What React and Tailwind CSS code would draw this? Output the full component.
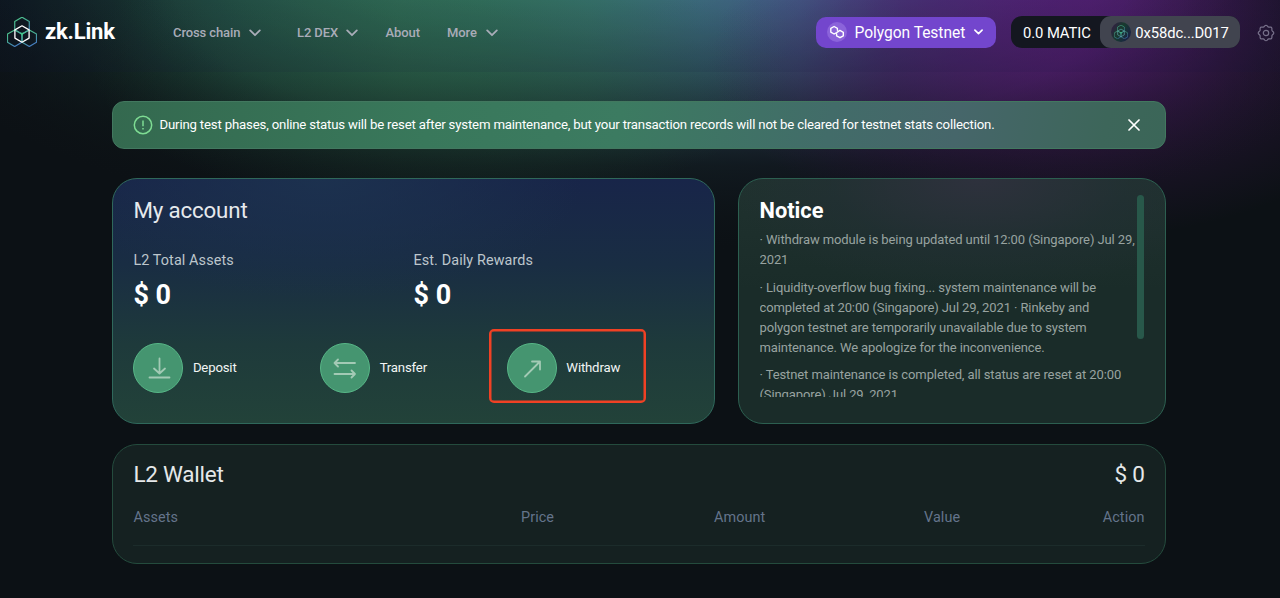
import React from "react";

const hex = (cx, cy, r) => {
  const w = r * 0.866;
  return `M${cx} ${cy - r}L${cx + w} ${cy - r / 2}V${cy + r / 2}L${cx} ${cy + r}L${cx - w} ${cy + r / 2}V${cy - r / 2}Z`;
};

function Logo({ className, inner = "#ffffff", id }) {
  return (
    <svg viewBox="0 0 30 30" className={className} fill="none">
      <defs>
        <linearGradient id={id} x1="0" y1="0" x2="0.5" y2="1">
          <stop offset="0" stopColor="#4fc98a" />
          <stop offset="0.55" stopColor="#47a995" />
          <stop offset="1" stopColor="#467fc0" />
        </linearGradient>
      </defs>
      <g stroke={`url(#${id})`} strokeWidth="1.2" strokeLinejoin="round">
        <path d={hex(15, 8.6, 8.4)} />
        <path d={hex(7.7, 21.2, 8.3)} />
        <path d={hex(22.3, 21.2, 8.3)} />
      </g>
      <path d={hex(15, 17, 8.2)} stroke={inner} strokeWidth="1.3" strokeLinejoin="round" />
      <path d="M12.6 15.8h4.8l-2.4 3z" fill="#3fc487" />
    </svg>
  );
}

function Chevron({ className, width = 1.8 }) {
  return (
    <svg viewBox="0 0 12 8" className={className} fill="none" stroke="currentColor" strokeWidth={width} strokeLinecap="round" strokeLinejoin="round">
      <path d="M1.2 1.4 6 6.2l4.8-4.8" />
    </svg>
  );
}

function Gear() {
  const pts = [];
  for (let i = 0; i <= 72; i++) {
    const a = (i / 72) * Math.PI * 2;
    const r = 7.1 + 0.65 * Math.cos(8 * a);
    pts.push(`${(9 + r * Math.cos(a)).toFixed(2)} ${(9 + r * Math.sin(a)).toFixed(2)}`);
  }
  return (
    <svg viewBox="0 0 18 18" className="h-[18px] w-[18px] shrink-0" fill="none" stroke="#77708a" strokeWidth="1.2">
      <path d={`M${pts.join("L")}Z`} />
      <circle cx="9" cy="9" r="2.7" />
    </svg>
  );
}

function Action({ label, children }) {
  return (
    <div className="flex w-[187px] items-center">
      <div className="flex h-[50px] w-[50px] items-center justify-center rounded-full border border-[#57b787] bg-[#459570]">
        <svg viewBox="0 0 50 50" className="h-[50px] w-[50px] shrink-0" fill="none" stroke="#a3cab5" strokeWidth="1.8" strokeLinecap="round" strokeLinejoin="round">
          {children}
        </svg>
      </div>
      <span className="ml-[9.5px] text-[13.2px] leading-5 tracking-[-0.18px] text-[#f1f5f4]">{label}</span>
    </div>
  );
}

function Stat({ label }) {
  return (
    <div className="w-[280.5px]">
      <div className="text-[14.4px] leading-5 tracking-[0.1px] text-[#bdc6cc]">{label}</div>
      <div className="mt-1.5 text-[27px] font-bold leading-9 text-white">$ 0</div>
    </div>
  );
}

export default function App() {
  return (
    <div
      className="h-[598px] w-[1280px] overflow-hidden bg-[#0c1115] bg-[radial-gradient(ellipse_350px_180px_at_1060px_60px,#51196a80_0%,#46185c50_50%,transparent_100%),radial-gradient(ellipse_350px_155px_at_440px_60px,#2c6a4c50_0%,#2c6a4c30_50%,transparent_100%),linear-gradient(180deg,#0c111500_0px,#0c111520_25px,#0c111566_72px,#0c1115a8_110px,#0c1115e0_165px,#0c1115_270px),radial-gradient(ellipse_770px_270px_at_650px_-20px,transparent_62%,#0c1115_100%),linear-gradient(90deg,#10222a_0px,#183630_120px,#235043_240px,#327056_400px,#34765f_480px,#3a7970_590px,#407184_700px,#46608a_800px,#4b3d80_900px,#552d80_1000px,#56247a_1090px,#46205f_1180px,#281638_1280px)] text-white antialiased [font-family:Roboto,'Liberation_Sans',sans-serif]"
    >
      <header className="flex h-[72px] items-start bg-[#14163c18]">
        <div className="flex h-[64px] w-full items-center pl-[7px]">
          <Logo className="h-[30px] w-[30px] shrink-0" id="brand" />
          <span className="ml-[8px] w-[128px] text-[22px] font-bold leading-7 tracking-[-0.2px]">zk.Link</span>
          <nav className="flex items-center pt-px text-[13px] font-medium leading-5 tracking-[-0.1px] text-[#a9acb8]">
            <span className="flex w-[124px] items-center gap-[9px]">Cross chain <Chevron className="h-[8px] w-[12px]" /></span>
            <span className="flex w-[88.5px] items-center gap-[8px]">L2 DEX <Chevron className="h-[8px] w-[12px]" /></span>
            <span className="w-[61.5px]">About</span>
            <span className="flex items-center gap-[9px]">More <Chevron className="h-[8px] w-[12px]" /></span>
          </nav>
          <div className="ml-auto flex items-center">
            <div className="flex h-[31px] w-[180px] items-center rounded-[10px] bg-[#7346cd] pl-[11px]">
              <span className="flex h-5 w-5 items-center justify-center rounded-full bg-[#8b63da]">
                <svg viewBox="0 0 16 14" className="h-[14px] w-4" fill="none" stroke="#fff" strokeWidth="1.4" strokeLinejoin="round" strokeLinecap="round">
                  <path d="M8.4 5.2V3.4L5.1 1.5 1.8 3.4v3.7L5.1 9l2.5-1.4 3.3-2.2 3.4 1.9v3.5L11 12.7 7.6 10.8V9" />
                </svg>
              </span>
              <span className="ml-[7.5px] w-[119px] pt-px text-[15.6px] leading-5 tracking-[-0.05px]">Polygon Testnet</span>
              <Chevron className="h-[6px] w-[9px]" width={2.2} />
            </div>
            <div className="ml-[15px] flex h-8 w-[229px] items-center rounded-[11px] bg-[#141720] pl-3">
              <span className="w-[77.5px] pt-px text-[14.8px] leading-5 tracking-[-0.08px]">0.0 MATIC</span>
              <div className="flex h-8 w-[140px] items-center rounded-[11px] bg-[#41444f] pl-[11px]">
                <span className="flex h-5 w-5 items-center justify-center rounded-full bg-[linear-gradient(120deg,#3a1548_0%,#173b2e_45%,#1b1a4c_100%)]">
                  <Logo className="h-[14px] w-[14px]" inner="#67aeb8" id="avatar" />
                </span>
                <span className="ml-1 pt-px text-[14.8px] leading-5 tracking-[-0.1px]">0x58dc...D017</span>
              </div>
            </div>
            <div className="ml-[17px] mr-[5px] pt-px"><Gear /></div>
          </div>
        </div>
      </header>

      <main className="ml-28 mt-[29px] w-[1054px]">
        <section className="flex h-12 items-center rounded-xl border border-[#42785f] bg-[linear-gradient(100deg,#34694f_0%,#39785b_30%,#3c7b61_48%,#426c69_68%,#46666a_80%,#3d665a_94%,#3b6658_100%)] pb-px pl-[20px] pr-[25px]">
          <svg viewBox="0 0 20 20" className="h-5 w-5 shrink-0" fill="none" stroke="#7edc93" strokeWidth="1.5">
            <circle cx="10" cy="10" r="8.7" />
            <path d="M10 5.5v5.8M10 13v1.5" />
          </svg>
          <span className="ml-[6.5px] whitespace-nowrap text-[13.2px] leading-5 tracking-[-0.17px]">During test phases, online status will be reset after system maintenance, but your transaction records will not be cleared for testnet stats collection.</span>
          <svg viewBox="0 0 12 12" className="ml-auto h-3 w-3" stroke="#fff" strokeWidth="1.7" strokeLinecap="round"><path d="m1 1 10 10M11 1 1 11" /></svg>
        </section>

        <div className="mt-[29px] flex gap-[23px]">
          <section className="h-[246px] w-[603px] rounded-[25px] border border-[#2f685b] bg-[radial-gradient(ellipse_260px_120px_at_210px_0px,#1d3450cc,transparent),linear-gradient(180deg,#182549_0%,#192d43_35%,#1e3a3b_68%,#224239_100%)] px-[20.4px] pt-[16px]">
            <h2 className="text-[22.3px] leading-[30px] tracking-[-0.15px] text-[#e6e9ed]">My account</h2>
            <div className="mt-[26px] flex"><Stat label="L2 Total Assets" /><Stat label="Est. Daily Rewards" /></div>
            <div className="relative mt-[30px] flex">
              <Action label="Deposit">
                <path d="M26.5 15.5v15M21 25.5l5.5 5 5.5-5M16.5 34.5h20" />
              </Action>
              <Action label="Transfer">
                <path d="M35 20H14.5m3.5-3.5L14.5 20l3.5 3.5M14.5 31H35m-3.5-3.5L35 31l-3.5 3.5" />
              </Action>
              <Action label="Withdraw">
                <path d="M18 33.5 33 18.5M25 18.5h8v8" />
              </Action>
              <div className="absolute -top-[14px] left-[355.6px] h-[74px] w-[157px] rounded-[5px] border-[2px] border-[#f04124] shadow-[inset_0_0_0_0.5px_#f04124]" />
            </div>
          </section>

          <section className="flex h-[246px] w-[428px] rounded-[25px] border border-[#2c5f50] bg-[#1b2e2b] bg-[radial-gradient(ellipse_250px_115px_at_240px_0px,#2e313d,#232f3588_60%,transparent),linear-gradient(180deg,#20322f,#1a2c29_45%)] pl-[20.5px] pt-4">
            <div className="h-[202px] w-[377.5px] overflow-hidden whitespace-nowrap text-[13px] leading-[20.1px] tracking-[-0.1px] text-[#98a3a0]">
              <h2 className="mb-[4px] h-[31px] text-[21.8px] font-bold leading-[31px] tracking-normal text-white">Notice</h2>
              <p className="mb-[7.6px]">· Withdraw module is being updated until 12:00 (Singapore) Jul 29,<br />2021</p>
              <p className="mb-[6.6px]">· Liquidity-overflow bug fixing... system maintenance will be<br />completed at 20:00 (Singapore) Jul 29, 2021 · Rinkeby and<br />polygon testnet are temporarily unavailable due to system<br />maintenance. We apologize for the inconvenience.</p>
              <p>· Testnet maintenance is completed, all status are reset at 20:00<br />(Singapore) Jul 29, 2021</p>
            </div>
            <div className="h-36 w-[7px] rounded-full bg-[#28584a]" />
          </section>
        </div>

        <section className="mt-5 h-[120px] rounded-[25px] border border-[#244b3d] bg-[#152121] px-[20.4px] pt-[14px]">
          <div className="flex justify-between text-[22.5px] leading-[30px] tracking-[-0.25px] text-[#e5e8e9]"><h2>L2 Wallet</h2><span>$ 0</span></div>
          <div className="mt-[16px] flex h-[41px] border-b border-[#1c2c2b] pt-[3px] text-[14.4px] leading-5 tracking-[0.1px] text-[#64748b]">
            <span className="w-[387.6px]">Assets</span>
            <span className="w-[193px]">Price</span>
            <span className="w-[210px]">Amount</span>
            <span>Value</span>
            <span className="ml-auto">Action</span>
          </div>
        </section>
      </main>
    </div>
  );
}
